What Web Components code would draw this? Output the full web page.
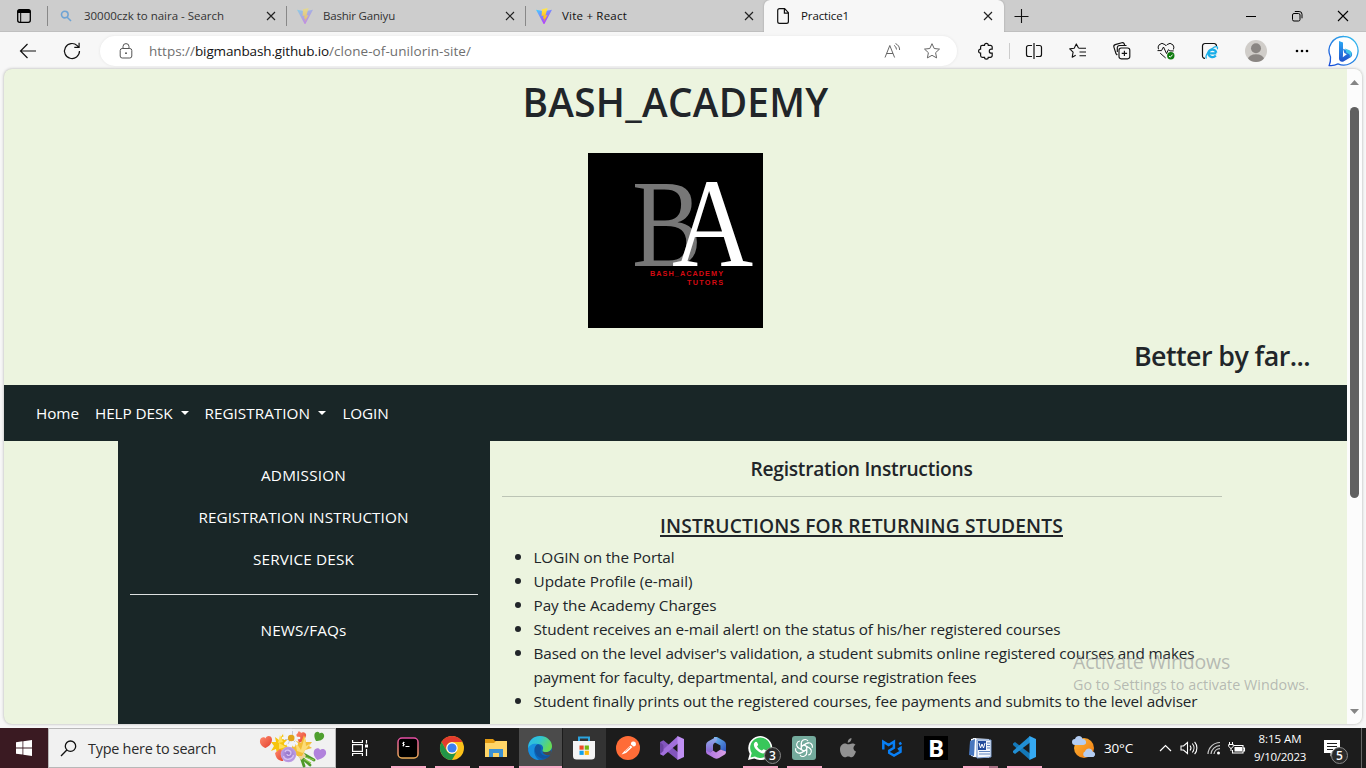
<!DOCTYPE html>
<html lang="en">
<head>
<meta charset="utf-8">
<title>Practice1</title>
<style>
html,body{margin:0;height:100%;overflow:hidden}
body{font-family:"Open Sans","Noto Sans",sans-serif;color:#212529;background:#f7f7f7}
</style>
</head>
<body>
<desk-screen></desk-screen>
<script>
const ICONS = {
  tabs:[16,16,`<rect x="1.7" y="1.7" width="12.6" height="12.6" rx="2" fill="none" stroke="#000" stroke-width="1.3"/><path d="M1.5 5V3.5a2 2 0 0 1 2-2h9a2 2 0 0 1 2 2V5z"/><path d="M4.7 5v9" stroke="#000"/>`],
  lens:[12,12,`<g fill="none" stroke="#6ea3d4" stroke-width="1.6"><circle cx="4.8" cy="4.6" r="3.3"/><path d="M7.2 7.2l3.8 3.8"/></g>`],
  vite:[16,16,`<defs><linearGradient id="a" x1="0" y1="0" x2=".6" y2="1"><stop offset="0" stop-color="#41d1ff"/><stop offset="1" stop-color="#bd34fe"/></linearGradient><linearGradient id="b" x1="0" y1="0" x2="0" y2="1"><stop offset="0" stop-color="#ffea50"/><stop offset="1" stop-color="#ffa800"/></linearGradient></defs><path d="M0 1.8L8 3.2l8-1.4L8.4 16h-.8z" fill="url(#a)"/><path d="M11.6 0L6 1.2 5.6 8l2-.4-.6 3.2 1.5-.4-.8 3.6 3.8-7-2.1.4z" fill="url(#b)"/>`],
  page:[14,16,`<path d="M1.7 2.6a1.9 1.9 0 0 1 1.9-1.9h5l3.8 4v8.7a1.9 1.9 0 0 1-1.9 1.9H3.6a1.9 1.9 0 0 1-1.9-1.9zM8.4.8v4.3h4" fill="none" stroke="#111" stroke-width="1.2"/>`],
  x:[10,10,`<path d="M1 1l8 8M9 1L1 9" stroke="#222" stroke-width="1.15"/>`],
  plus:[14,14,`<path d="M7.5 0v14M.5 7.5h14" stroke="#111" stroke-width="1.1"/>`],
  min:[12,12,`<path d="M1 6.5h10" stroke="#000"/>`],
  max:[12,12,`<g fill="none" stroke="#000"><rect x="1.5" y="3.5" width="7.5" height="7.5" rx="1.5"/><path d="M3.8 1.5h4.4a2.8 2.8 0 0 1 2.8 2.8v4"/></g>`],
  close:[12,12,`<path d="M1 1l10 10M11 1L1 11" stroke="#000" stroke-width="1.1"/>`],
  back:[18,16,`<path d="M17 8H1.5M8.5 1L1.5 8l7 7" fill="none" stroke="#111" stroke-width="1.2"/>`],
  reload:[18,18,`<path d="M16.5 9a7.5 7.5 0 1 1-2.3-5.4l1.6 1.6M16.1.8v4.6h-4.8" fill="none" stroke="#111" stroke-width="1.2"/>`],
  lock:[14,16,`<g fill="none" stroke="#555"><rect x="1.2" y="5.5" width="11.6" height="9.5" rx="2"/><path d="M4 5.5V3.6a3 3 0 0 1 6 0v1.9"/></g><circle cx="7" cy="10.2" r=".9" fill="#444"/>`],
  read:[17,16,`<g fill="none" stroke="#666"><path d="M1 14.5L5.8 2.5l4.8 12M2.6 10.5h6.4M10 2.3a5 5 0 0 1 2.5 4.2M11.5.6a7 7 0 0 1 4.1 6.4"/></g>`],
  star:[18,18,`<path d="M9 1.7l2.2 4.8 5.3.6-3.9 3.6 1 5.2L9 13.3l-4.6 2.6 1-5.2L1.5 7.1l5.3-.6z" fill="none" stroke="#666" stroke-linejoin="round"/>`],
  ext:[16,16,`<path d="M4.4 2.3h2.1a1.9 1.9 0 0 1 3.8 0h2.1a1.8 1.8 0 0 1 1.8 1.8v2.1h-.9a2 2 0 0 0 0 4h.9v2.3a1.8 1.8 0 0 1-1.8 1.8h-2.1a1.9 1.9 0 0 1-3.8 0H4.4a1.8 1.8 0 0 1-1.8-1.8v-2.3a2 2 0 0 1 0-4V4.1a1.8 1.8 0 0 1 1.8-1.8z" fill="none" stroke="#111" stroke-width="1.2"/>`],
  split:[16,16,`<path d="M6 2.5H2.5a2 2 0 0 0-2 2v7a2 2 0 0 0 2 2H6M10 2.5h3.5a2 2 0 0 1 2 2v7a2 2 0 0 1-2 2H10M8 0v16" fill="none" stroke="#111" stroke-width="1.2"/>`],
  favs:[18,16,`<path d="M9.5 5L7.3.9 5.2 5.3.7 5.9l3.4 3.3-.9 5 3.5-1.9M9.5 5.2H17M10.5 9H17M10.5 12.8H17" fill="none" stroke="#111" stroke-width="1.1" stroke-linejoin="round"/>`],
  coll:[18,18,`<g fill="none" stroke="#111" stroke-width="1.15"><rect x="6" y="6" width="10.8" height="10.8" rx="2.2"/><path d="M11.4 8.7v5.4M8.7 11.4h5.4M4.3 13L3 11.6.9 5.1A2 2 0 0 1 2.2 2.6L8.8.7a2 2 0 0 1 2.5 1.3l.4 1.500M4.3 10V5.7a2.2 2.2 0 0 1 2.2-2.2h7"/></g>`],
  health:[18,18,`<path d="M1.5 7.3a4.3 4.3 0 0 1 .6-4.500 4.200 4.200 0 0 1 5.800-.2L9 3.700l1.100-1.100a4.200 4.200 0 0 1 5.800.2 4.300 4.300 0 0 1 .500 4.700M3.200 11.200l5.500 4.800M.5 8.600h4l2-3.600 3 6.500 2-3.900 1.200 1.300h4" fill="none" stroke="#111" stroke-width="1"/><circle cx="13.800" cy="13.800" r="3.700" fill="#107c10"/><path d="M12 14l1.300 1.200 2.300-2.600" fill="none" stroke="#fff"/>`],
  ie:[18,18,`<path d="M4 16.300H3.700A2.200 2.200 0 0 1 1.500 14V4a2.500 2.500 0 0 1 2.500-2.500h9A2.500 2.500 0 0 1 15.500 4" fill="none" stroke="#111" stroke-width="1.200"/><path d="M15.300 11.300H7.500M7.300 11a4.100 4.100 0 0 1 8-.3M7.200 11a4.300 4.300 0 0 0 7.600 2.500" fill="none" stroke="#19aee8" stroke-width="2.300"/><path d="M5.500 16.500c-2-2.500 2.500-8.500 7.500-11.300 3-1.300 4.200-.3 3.300 2" fill="none" stroke="#19aee8" stroke-width="1.300"/>`],
  user:[22,22,`<defs><clipPath id="c"><circle cx="11" cy="11" r="11"/></clipPath></defs><circle cx="11" cy="11" r="11" fill="#d0cdc9"/><g fill="#8a8683" clip-path="url(#c)"><circle cx="11" cy="8.200" r="5"/><ellipse cx="11" cy="19" rx="8" ry="4.700"/></g>`],
  dots:[14,4,`<circle cx="2" cy="2" r="1.300"/><circle cx="7" cy="2" r="1.300"/><circle cx="12" cy="2" r="1.300"/>`],
  bing:[32,32,`<defs><linearGradient id="d" x1="1" y1="0" x2="0" y2="1"><stop offset="0" stop-color="#35c5f0"/><stop offset="1" stop-color="#174ad8"/></linearGradient><linearGradient id="e" x1="0" y1="0" x2="0" y2="1"><stop offset="0" stop-color="#2ba8f5"/><stop offset="1" stop-color="#2052cb"/></linearGradient></defs><path d="M16 1.500a14.300 14.300 0 1 1-6 27.400c-3 1.500-6 2-8.800 1.600.9-2 1.500-5 1.300-8.500A14.300 14.300 0 0 1 16 1.500z" fill="#fff" stroke="url(#d)" stroke-width="1.300"/><path d="M11 6l4 1.500v12.200l-.2 2.500 4-3-2.500-1.200-1.300-4.300 7.600 3.100c2 1 2 3.500.5 5.200l-7.600 4.500c-2.500 1-4.500-.6-4.500-3z" fill="url(#e)"/><path d="M17 13.500l4.600 1.800c3 1.600 2.500 5.200 0 7.200 1-2.600-.5-3.800-3-4.500z" fill="#42c5e8"/>`],
  up:[9,5,`<path d="M0 5h9L4.500 0z" fill="#858585"/>`],
  down:[9,5,`<path d="M0 0h9L4.500 5z" fill="#858585"/>`],
  win:[16,16,`<path d="M0 2.200L6.500 1.300v6.200H0zM7.300 1.200L16 0v7.500H7.300zM0 8.400h6.500v6.200L0 13.700zM7.300 8.400H16V16l-8.700-1.200z" fill="#fff"/>`],
  search:[17,17,`<g fill="none" stroke="#111" stroke-width="1.300"><circle cx="10.500" cy="6.200" r="5.200"/><path d="M6.800 10L1 16"/></g>`],
  flowers:[68,38,`<defs><linearGradient id="r" x1="0" y1="0" x2="1" y2="1"><stop offset="0" stop-color="#ff8a6c"/><stop offset="1" stop-color="#e2402f"/></linearGradient><radialGradient id="v"><stop offset="0" stop-color="#8f6fc6"/><stop offset="1" stop-color="#bfa0e6"/></radialGradient></defs>
<path d="M6.500 9.500C7 6 13 6 13 10.500c0 4-3 7-6.500 8.500C3 17.500.5 15 1 11.500 1.500 8 5.500 7.500 6.500 9.500z" fill="url(#r)"/><path d="M60.500 4.500c2-2 5.500 0 4.500 3.500-1 3-4.500 4-8 4-1.500-3-2.500-6.500-.5-8.500 2-1.500 4-.5 4 1z" fill="#4f9f2e"/><path d="M61 21c2.500-2.500 7-.5 6 4-1 3-5 5-8.500 6-3-2.500-4.500-6-3.500-9 1-3.500 5.500-3.500 6-1z" fill="#b182dc"/>
<path d="M37 5c1-3 4-3 5-1 2-2 6 0 5 3-1 4-4 6-7 7z" fill="url(#r)"/>
<path d="M41 23l14 8M40 26l11 10M42 28l3 9" stroke="#4f9a2a" stroke-width="2.800" stroke-linecap="round"/><path d="M46 28l9 3M45 30l7 4" stroke="#8cc94a" stroke-width="1.200"/>
<path d="M33 20l8-3 6 10-5 4z" fill="#ecd29a"/>
<path d="M16 8l4 3 4-6 1 6 5-1-3 5 4 4-5 0 1 6-5-4-4 4-1-5-5 2 3-5-3-4 5 0z" fill="#f7c40e"/><path d="M19 14l2-8 3 7zM20 14l7 4-7 2z" fill="#ffe05a"/>
<path d="M34 21c-3-4-1-7 3-6l-2-4 7 3 3-8 2 7 6 0-3 4 3 2-7 2-3 6-5 0z" fill="#f3bd36"/><path d="M36 12l6 9 4-14 1 10 5-3-8 10-6-2z" fill="#fbdc78"/>
<g stroke="#f2f3f8" stroke-width="2.700" stroke-linecap="round"><path d="M32 1v16M24 9h16M26.300 3.300l11.400 11.400M37.700 3.300L26.300 14.700M29 1.600l6 14.800M35 1.600l-6 14.800"/></g><g stroke="#a9aebf" stroke-width=".6"><path d="M33.500 2v5M26 10.500h5M36 13l-3-3M29 15l2-4"/></g><circle cx="32.200" cy="9" r="3.300" fill="#dfa51b"/>
<path d="M16 24l5-4 5 4-2 8c-4 0-7-2-8-8z" fill="url(#r)"/><circle cx="29.500" cy="25.500" r="7.800" fill="url(#v)"/><path d="M26 23c1-3 6-2 6 1s-4 3-4 1M24.500 27c1 5 9 4 10-1" fill="none" stroke="#d6c0f2" stroke-width="1.300"/>`],
  task:[18,16,`<g fill="none" stroke="#fff" stroke-width="1.200"><rect x="1.600" y="4.600" width="9.800" height="6.800"/><path d="M1.600 0v2.500h9.800V0M1.600 16v-2.500h9.800V16M15.500 0v3.500M15.500 9v7"/></g><path d="M14 4.500h3v3h-3z" fill="#fff"/>`],
  term:[22,22,`<defs><linearGradient id="f" x1="0" y1="0" x2="0" y2="1"><stop offset="0" stop-color="#e54da4"/><stop offset="1" stop-color="#ecae57"/></linearGradient></defs><rect x="1" y="1" width="20" height="20" rx="4" fill="#000" stroke="url(#f)" stroke-width="1.500"/><path d="M7.500 5.500l-2 .8 2 1.400-2 1M6.500 4.800v4.600M8.500 9.500h4" fill="none" stroke="#fff"/>`],
  chrome:[24,24,`<circle cx="12" cy="12" r="12" fill="#fbc11a"/><path d="M1.600 6A12 12 0 0 1 22.400 6H12a6 6 0 0 0-5.200 9z" fill="#e33b2e"/><path d="M1.600 6a12 12 0 0 0 10.400 18l5.200-9A6 6 0 0 1 6.800 15z" fill="#229447"/><circle cx="12" cy="12" r="5.700" fill="#fff"/><circle cx="12" cy="12" r="4.600" fill="#3c7ff0"/>`],
  folder:[22,18,`<path d="M0 0h8l2 2h11v4H0z" fill="#e39a11"/><path d="M0 4h9l2-2h11v16H0z" fill="#ffd567"/><path d="M4 10h14v8h-4v-4H8v4H4z" fill="#3c91d3"/>`],
  edge:[24,24,`<defs><linearGradient id="g" x1="0" y1="0" x2="1" y2=".4"><stop offset="0" stop-color="#2bb8ee"/><stop offset=".5" stop-color="#32c5d0"/><stop offset="1" stop-color="#67da55"/></linearGradient></defs><circle cx="12" cy="12" r="12" fill="#0b67bd"/><path d="M.2 10C1 4 6 0 12 0c7 0 12 5 12 10 0 4-3 6-6 6-4 0-4-1.200-3.200-2.500C16 11 14 8 10 8 5 8 1 10 .2 13z" fill="url(#g)"/><path d="M9 8.200c-4 2-3 12 5 14.300 3 .8 7-1 8.500-3.500-6 2.500-12-1-9.500-6 .5-1.500-1-4.700-4-4.800z" fill="#12549f"/><path d="M.2 13C1 9 5 7 10 8c-5 2-5.500 11 1 16C4 24 0 18 .2 13z" fill="#188fdf"/><path d="M14.700 13.500c-1 1.500 0 2.700 3.300 2.700 2 0 4-.7 5.200-2.200l-.5 4.500c-4 2-9-.5-8-5z" fill="#4b4b4b"/>`],
  store:[24,24,`<path d="M7 6V1.500h10V6" fill="none" stroke="#2ba4df" stroke-width="2"/><path d="M1 5h22v15a3.500 3.500 0 0 1-3.500 3.500h-15A3.500 3.500 0 0 1 1 20z" fill="#f4f4f4"/><path d="M7.500 9.500h4.200v4.200H7.500z" fill="#ef4b27"/><path d="M12.700 9.500h4.200v4.200h-4.200z" fill="#75b710"/><path d="M7.500 14.700h4.200v4.200H7.500z" fill="#12a0e8"/><path d="M12.700 14.700h4.200v4.200h-4.200z" fill="#fdb90b"/>`],
  postman:[24,24,`<circle cx="12" cy="12" r="12" fill="#ff6c37"/><path d="M5.500 18.500l2.500-3 6.500-6 2 1.600L10 17zM15 8.500a2.500 2.500 0 1 1 2.500 2z" fill="#fff"/><path d="M9 15.500l5-4.500" stroke="#ff6c37" stroke-width=".7"/>`],
  vs:[24,24,`<path d="M0 6l3.500-1.700L18 16.200V24L5 13.700 3.400 15v4.800L0 18z" fill="#8255bd"/><path d="M3.400 19.800L18 7.500V0L0 16.500V18z" fill="#a270dc"/><path d="M17.500 0L24 3v18l-6.500 3z" fill="#c090f3"/><path d="M0 6l3.400 3v6L0 18z" fill="#6b43a1"/>`],
  m365:[20,22,`<defs><linearGradient id="i" x1="0" y1="0" x2="1" y2="1"><stop offset="0" stop-color="#6fc1f0"/><stop offset="1" stop-color="#2d4fbd"/></linearGradient><linearGradient id="l" x1="0" y1="0" x2="0" y2="1"><stop offset="0" stop-color="#8fb4ee"/><stop offset="1" stop-color="#8c5fd0"/></linearGradient><linearGradient id="m"><stop offset="0" stop-color="#a86fe0"/><stop offset="1" stop-color="#dba0e6"/></linearGradient></defs><path d="M8 0h3l7 4a4 4 0 0 1 2 3.500V15l-5.500-2.500V8.500L8 5z" fill="url(#i)"/><path d="M10 0L2 4.500A4 4 0 0 0 0 8v6.500l3 2 4-3V8.500C7 6 11 5 11 2z" fill="url(#l)"/><path d="M0 13.500c0 2.500.5 3.200 2 4L8 21c2 1 3 1 5 0l5-3c2-1.200 2-2 2-3.500l-5.500-2L10 15.500 7 13.500l-3 2z" fill="url(#m)"/>`],
  wa:[24,24,`<path d="M0 24l1.700-6.200A12 12 0 1 1 6.300 22.500z" fill="#fff"/><path d="M2.500 21.500l1.200-4.400A10.200 10.200 0 1 1 7 20.400z" fill="#38c75a"/><path d="M6.300 7c2-2.500 3-.5 3.800 1.500.3.800-1.300 1.500-1 2 1 2 2.500 3.300 4.500 4 .9.200 1.200-1.500 2-1.300 2.500 1 3 1.300 2.300 2.600-1.300 2.400-4.900 2-8-.7C6.500 12.300 5 9 6.300 7z" fill="#fff"/>`],
  gpt:[24,24,`<rect width="24" height="24" rx="3" fill="#74aa9c"/><g fill="none" stroke="#fff" stroke-width="1.050"><g id="j"><path d="M9.400 13.500V7.200a3.700 3.700 0 0 1 6.600-2.300M9.400 10.300l5.200-3a3.700 3.700 0 0 1 2.300-.4"/></g><use href="#j" transform="rotate(60 12 12)"/><use href="#j" transform="rotate(120 12 12)"/><use href="#j" transform="rotate(180 12 12)"/><use href="#j" transform="rotate(240 12 12)"/><use href="#j" transform="rotate(300 12 12)"/></g>`],
  apple:[16,20,`<path d="M11.500 0c.2 2.500-1.500 4.500-3.800 4.700C7.500 2.300 9.300.4 11.500 0zM15.500 6.700c-3 1.900-2.500 5.500.5 6.900-1 2.800-2.600 5.700-4.300 5.700-1.300 0-2-.8-3.500-.8s-2.300.8-3.500.8C2.300 19.300 0 15 0 11.500 0 8 2.200 5.500 5 5.500c1.300 0 2.300.8 3.400.8 1 0 2.200-.9 3.900-.9 1.300 0 2.400.5 3.200 1.300z" fill="#929292"/>`],
  mui:[22,18,`<path d="M2.300 10.500V2.700l5.300 3.300 5.300-3.300v6L8.200 11.600v2.200l4.800 2.700 6.500-3.700V9l-2.500 1.500M18.200 5.200l2.200-1.300" fill="none" stroke="#087ff5" stroke-width="2.500"/>`],
  word:[23,22,`<path d="M4 1l16 1v19L4 20z" fill="#dbe6f6"/><path d="M2 2l5-1v19l-5-1z" fill="#fff"/><path d="M1 4l5-2-1 17-5-1z" fill="#4776be"/><path d="M8 3h14v17l-14 1z" fill="#f4f7fc" stroke="#7899cc"/><path d="M9 4h8v9H9z" fill="#234c9c"/><path d="M10 6l1.500 5 1.500-4 1.500 4L16 6" fill="none" stroke="#fff"/><path d="M18 6h3M18 8.500h3M18 11h3M10 14.500h11M10 17h11" stroke="#6085bf"/>`],
  code:[24,24,`<path d="M1 7.500L3 6l15 11.500V24L1 9z" fill="#1478b8"/><path d="M1 16.500L3 18 18 6.500V0L1 15z" fill="#218fd4"/><path d="M17.500 0L24 3v18l-6.500 3z" fill="#35a9f2"/>`],
  weather:[24,24,`<defs><linearGradient id="k" x1="0" y1="0" x2="1" y2="1"><stop offset="0" stop-color="#ffb536"/><stop offset="1" stop-color="#ef7a10"/></linearGradient></defs><circle cx="12" cy="12" r="10" fill="url(#k)"/><path d="M3 9a3 3 0 0 1 0-6c1-4 7-4 7.500 0a3 3 0 0 1 1 6z" fill="#b4cdf2"/><path d="M13 21a3 3 0 0 1 0-5.500c1-4 7-4 7.500 0a2.900 2.900 0 0 1 1 5.500z" fill="#b4cdf2"/>`],
  chev:[13,8,`<path d="M1 7l5.500-5.500L12 7" fill="none" stroke="#fff" stroke-width="1.200"/>`],
  sound:[18,14,`<path d="M1 5h2.500l4-3.500v11L3.500 9H1zM10 4.500a4 4 0 0 1 0 5M12.300 2.500a7 7 0 0 1 0 9M14.600.8a9.500 9.500 0 0 1 0 12.400" fill="none" stroke="#fff" stroke-width="1.100"/>`],
  wifi:[14,14,`<g fill="none" stroke="#ccc" stroke-width="1.200"><path d="M1 13A12 12 0 0 1 13 1.500M4 13a9 9 0 0 1 9-8.300M7 13a6 6 0 0 1 6-5.300"/></g><circle cx="11.500" cy="12" r="1.500" fill="#fff"/>`],
  batt:[17,13,`<path d="M6 3.500h9V11H4.500V8M15 6h1.500v3H15" fill="none" stroke="#fff" stroke-width="1.100"/><path d="M6.500 5H14v4.500H6.500z" fill="#fff"/><path d="M1.500 0v2.500M4.500 0v2.500M.7 2.500h4.600v2L3 6.500l-2.300-2zM3 6v3" stroke="#fff" fill="#1c1c1c"/>`],
  note:[16,17,`<path d="M0 0h16v13h-6l-3.500 3.500V13H0z" fill="#fff"/><path d="M3 3.500h10M3 6.500h10M3 9.500h6" stroke="#1c1c1c" stroke-width="1.100"/>`],
  logo:[175,175,`<rect width="175" height="175" fill="#000"/><g font-family="Liberation Serif,serif" font-size="125"><text transform="translate(44 113) scale(.84 1)" fill="#777">B</text><text transform="translate(84 113) scale(.9 1.010)" fill="#fff">A</text></g><g font-family="Liberation Sans,sans-serif" font-size="7.300" font-weight="700" fill="#d40a12" text-anchor="end"><text x="135" y="123.200" textLength="73">BASH_ACADEMY</text><text x="135" y="131.700" textLength="36">TUTORS</text></g>`]
};

function component(name, css, html) {
  const t = document.createElement('template');
  t.innerHTML = `<style>${css}</style>${html}`;
  customElements.define(name, class extends HTMLElement {
    constructor() {
      super();
      this.attachShadow({mode: 'open'}).append(t.content.cloneNode(true));
    }
  });
}

customElements.define('ui-icon', class extends HTMLElement {
  connectedCallback() {
    if (this.shadowRoot) return;
    const [w, h, body] = ICONS[this.getAttribute('name')];
    this.attachShadow({mode: 'open'}).innerHTML =
      `<style>:host{display:block;flex:none;width:${w}px;height:${h}px}svg{display:block;overflow:visible}</style><svg width="${w}" height="${h}" viewBox="0 0 ${w} ${h}">${body}</svg>`;
  }
});

component('browser-tab', `
:host{display:flex;align-items:center;box-sizing:border-box;width:239px;height:32px;padding:0 10px 0 9px;position:relative;font-size:11.500px;color:#333}
:host::before{content:"";width:1px;height:20px;background:#888;position:absolute;left:0;top:6px}
:host([active]){width:240px;padding-right:11px;background:#f7f7f7;border-radius:6px 6px 0 0;color:#111;box-shadow:0 0 2px #999;clip-path:inset(0 -3px 0 -3px)}
:host([active])::before{display:none}
.i{width:20px;display:flex;justify-content:center;margin-right:8px}
:host([faded]) .i{opacity:.45}
.t{flex:1;line-height:16px}`,
`<span class="i"><slot name="icon"></slot></span><span class="t"><slot></slot></span><ui-icon name="x"></ui-icon>`);

component('tab-strip', `
:host{display:flex;height:32px;background:#cdcdcd;box-shadow:inset 0 -1px #bfbfbf}
.c{display:flex;align-items:center;justify-content:center}`,
`<div class="c" style="width:47px"><ui-icon name="tabs"></ui-icon></div>
<browser-tab><ui-icon slot="icon" name="lens"></ui-icon><fit-text w="140">30000czk to naira - Search</fit-text></browser-tab>
<browser-tab faded><ui-icon slot="icon" name="vite"></ui-icon><fit-text w="72">Bashir Ganiyu</fit-text></browser-tab>
<browser-tab style="color:#111"><ui-icon slot="icon" name="vite"></ui-icon><fit-text w="65">Vite + React</fit-text></browser-tab>
<browser-tab active><ui-icon slot="icon" name="page"></ui-icon><fit-text w="48">Practice1</fit-text></browser-tab>
<div class="c" style="width:34px"><ui-icon name="plus"></ui-icon></div>
<div class="c" style="width:46px;margin-left:auto"><ui-icon name="min"></ui-icon></div>
<div class="c" style="width:46px"><ui-icon name="max"></ui-icon></div>
<div class="c" style="width:46px"><ui-icon name="close"></ui-icon></div>`);

component('tool-bar', `
:host{display:flex;height:37px;background:#f7f7f7;align-items:center;padding:0 0 0 6px}
.c{width:44px;display:flex;align-items:center;justify-content:center}
.a{display:flex;align-items:center;width:857px;height:30px;margin-left:6px;border-radius:15px;background:#fff;box-shadow:0 0 3px #e4e4e4;font-size:13.500px;color:#6f6f6f}
.a b{font-weight:400;color:#111}.u{flex:1;display:flex;margin-left:1px}
.s{width:1px;height:16px;background:#ccc;margin:0 2px 0 1px}`,
`<div class="c"><ui-icon name="back"></ui-icon></div><div class="c"><ui-icon name="reload"></ui-icon></div>
<div class="a"><div class="c" style="width:48px;margin-left:2px;margin-right:-2px"><ui-icon name="lock"></ui-icon></div><span class="u"><fit-text w="46">https://</fit-text><b><fit-text w="134">bigmanbash.github.io</fit-text></b><fit-text w="142">/clone-of-unilorin-site/</fit-text></span>
<div class="c" style="width:40px"><ui-icon name="read"></ui-icon></div><div class="c" style="width:40px;margin-right:5px"><ui-icon name="star"></ui-icon></div></div>
<div class="c" style="margin-left:7px">
<ui-icon name="ext"></ui-icon></div><div class="s"></div>
<div class="c"><ui-icon name="split"></ui-icon></div><div class="c"><ui-icon name="favs"></ui-icon></div><div class="c"><ui-icon name="coll"></ui-icon></div><div class="c"><ui-icon name="health"></ui-icon></div><div class="c"><ui-icon name="ie"></ui-icon></div><div class="c" style="width:48px"><ui-icon name="user"></ui-icon></div><div class="c"><ui-icon name="dots"></ui-icon></div><div class="c" style="width:40px"><ui-icon name="bing"></ui-icon></div>`);

component('site-header', `
:host{display:flex;flex-direction:column;align-items:center;height:316px}
h1{margin:9px 0 27px;font-size:38.800px;line-height:48px;font-weight:600}
h2{margin:11px 37px 0 auto;font-size:26.800px;line-height:34px;font-weight:600}`,
`<h1><fit-text w="306">BASH_ACADEMY</fit-text></h1><ui-icon name="logo"></ui-icon><h2><fit-text w="176">Better by far...</fit-text></h2>`);

component('site-nav', `
:host{display:flex;align-items:center;height:56px;box-sizing:border-box;padding-left:32px;gap:16px;background:#192627;color:#fff;font-size:15.300px;line-height:24px}
.d{display:flex;align-items:center;gap:8px}
.d::after{content:"";border:4.500px solid transparent;border-top-color:#fff;border-bottom:0}`,
`<fit-text w="43">Home</fit-text><span class="d"><fit-text w="77.5">HELP DESK</fit-text></span><span class="d"><fit-text w="105.5">REGISTRATION</fit-text></span><fit-text w="46" style="margin-left:.5px">LOGIN</fit-text>`);

component('side-menu', `
:host{display:flex;flex-direction:column;align-items:center;box-sizing:border-box;width:372px;padding:22px 12px 0;background:#192627;color:#fff;font-size:15.300px;line-height:24px;gap:18px}
hr{width:100%;margin:5px 0 5px;border:0;border-top:1px solid #dde0e0}
fit-text{margin-right:1px}`,
`<fit-text w="85">ADMISSION</fit-text><fit-text w="210">REGISTRATION INSTRUCTION</fit-text><fit-text w="101">SERVICE DESK</fit-text><hr><fit-text w="86">NEWS/FAQs</fit-text>`);

component('instruction-panel', `
:host{display:block;box-sizing:border-box;width:744px;padding:16px 12px 0;font-size:15.300px;line-height:24px}
h5{margin:0 1px 0 0;text-align:center;font-size:19.200px;line-height:24px;font-weight:600}
hr{margin:15px 0 17px;border:0;border-top:1px solid #bcc4b5}
ul{margin:7px 0 0;padding-left:31.500px}li fit-text{display:block}li::marker{font-size:17px}`,
`<h5><fit-text w="222">Registration Instructions</fit-text></h5><hr>
<h5><fit-text w="403" underline>INSTRUCTIONS FOR RETURNING STUDENTS</fit-text></h5>
<ul><li><fit-text w="141">LOGIN on the Portal</fit-text></li><li><fit-text w="159">Update Profile (e-mail)</fit-text></li><li><fit-text w="183">Pay the Academy Charges</fit-text></li><li><fit-text w="527">Student receives an e-mail alert! on the status of his/her registered courses</fit-text></li><li><fit-text w="661">Based on the level adviser's validation, a student submits online registered courses and makes</fit-text><fit-text w="443">payment for faculty, departmental, and course registration fees</fit-text></li><li><fit-text w="664">Student finally prints out the registered courses, fee payments and submits to the level adviser</fit-text></li></ul>`);

component('scroll-bar', `
:host{display:flex;flex-direction:column;align-items:center;width:15px;background:#fcfcfc;box-sizing:border-box;padding:11px 0 10px}
.t{width:9px;height:391px;border-radius:5px;background:#606060;margin:22px 0 auto}`,
`<ui-icon name="up"></ui-icon><div class="t"></div><ui-icon name="down"></ui-icon>`);

component('web-view', `
:host{display:flex;width:1358px;height:655px;margin:0 4px 4px;border-radius:8px;overflow:hidden;background:#ecf4df;box-shadow:0 0 3px #aaa}
.p{width:1343px}.b{display:flex;width:1116px;height:283px;margin:0 auto 0 114px}`,
`<div class="p"><site-header></site-header><site-nav></site-nav><div class="b"><side-menu></side-menu><instruction-panel></instruction-panel></div></div><scroll-bar></scroll-bar>`);

component('task-button', `
:host{display:flex;align-items:center;justify-content:center;width:44px;height:40px;position:relative}
:host([open])::after{content:"";position:absolute;left:5px;width:35px;bottom:0;height:2px;background:#f9a9c6}
:host([active]){background:linear-gradient(90deg,transparent 1px,#4b4b4b 1px)}
:host([active])::after{left:1px;width:43px}
:host([lit]){background:linear-gradient(90deg,transparent 1px,#333 1px)}
:host([stack])::after{background:linear-gradient(90deg,#f9a9c6 26px,#a97186 26px)}`,
`<slot></slot>`);

component('count-badge', `
:host{position:absolute;display:flex;align-items:center;justify-content:center;width:15px;height:15px;border:1px solid #888;border-radius:50%;background:#2b2b2b;color:#fff;font-size:12px;line-height:15px;font-weight:600}`,
`<slot></slot>`);

component('task-bar', `
:host{display:flex;height:40px;background:#1c1c1c;color:#fff}
.w{width:48px;background:#3a1a22;display:flex;align-items:center;justify-content:center}
.q{display:flex;align-items:center;box-sizing:border-box;width:288px;margin-right:2px;border:1px solid #b8b8b8;background:#f1f1f1;padding:0 8px 0 11px;font-size:14.400px;color:#2b2b2b}
.q fit-text{margin:0 auto 0 11px}
.bs{font:700 24px/24px "Open Sans",sans-serif;width:24px;height:24px;background:#000;text-align:center}
.n{display:flex;align-items:center;margin-left:26px;font-size:13.500px}
.clk{display:flex;flex-direction:column;align-items:center;font-size:11.500px;line-height:18px;width:52px;margin:-1px 1px 0 9px}
.m{position:relative;margin:0 0 0 17px}
.e{margin-left:auto;width:4px;border-left:1px solid #666}`,
`<div class="w"><ui-icon name="win"></ui-icon></div>
<div class="q"><ui-icon name="search"></ui-icon><fit-text w="128">Type here to search</fit-text><ui-icon name="flowers"></ui-icon></div>
<task-button><ui-icon name="task"></ui-icon></task-button>
<task-button open style="margin-left:4px"><ui-icon name="term"></ui-icon></task-button>
<task-button open><ui-icon name="chrome"></ui-icon></task-button>
<task-button open><ui-icon name="folder"></ui-icon></task-button>
<task-button open active><ui-icon name="edge"></ui-icon></task-button>
<task-button lit><ui-icon name="store"></ui-icon></task-button>
<task-button><ui-icon name="postman"></ui-icon></task-button>
<task-button><ui-icon name="vs"></ui-icon></task-button>
<task-button><ui-icon name="m365"></ui-icon></task-button>
<task-button open><ui-icon name="wa"></ui-icon><count-badge style="left:26px;top:19px">3</count-badge></task-button>
<task-button open><ui-icon name="gpt"></ui-icon></task-button>
<task-button><ui-icon name="apple"></ui-icon></task-button>
<task-button><ui-icon name="mui"></ui-icon></task-button>
<task-button><span class="bs">B</span></task-button>
<task-button open stack><ui-icon name="word"></ui-icon></task-button>
<task-button open><ui-icon name="code"></ui-icon></task-button>
<div class="n"><ui-icon name="weather"></ui-icon><fit-text w="29" style="margin:0 26px 0 8px">30°C</fit-text><ui-icon name="chev"></ui-icon><ui-icon name="sound" style="margin:0 9px 0 8px"></ui-icon><ui-icon name="wifi"></ui-icon><ui-icon name="batt" style="margin-left:7px"></ui-icon><div class="clk"><fit-text w="43">8:15 AM</fit-text><fit-text w="52">9/10/2023</fit-text></div><div class="m"><ui-icon name="note"></ui-icon><count-badge style="left:7px;top:7px">5</count-badge></div></div><div class="e"></div>`);

component('activation-notice', `
:host{position:absolute;left:1073px;top:649px;color:rgba(135,135,140,.55);font-size:19.500px;line-height:26px}
p{margin:0}p+p{font-size:14.300px;line-height:20px}`,
`<p><fit-text w="157">Activate Windows</fit-text></p><p><fit-text w="236">Go to Settings to activate Windows.</fit-text></p>`);

component('desk-screen', `
:host{display:block;position:relative;width:1366px;height:768px;overflow:hidden;background:#f7f7f7}`,
`<tab-strip></tab-strip><tool-bar></tool-bar><web-view></web-view><task-bar></task-bar><activation-notice></activation-notice>`);

/* A single line of text tracked so that it fills the width given in "w". */
customElements.define('fit-text', class extends HTMLElement {
  connectedCallback() {
    if (!this.shadowRoot) this.attachShadow({mode: 'open'}).innerHTML =
      `<style>:host{display:inline-block;white-space:pre}:host([underline]) span{text-decoration:underline;text-decoration-thickness:2px;text-underline-offset:2px}</style><span><slot></slot></span>`;
    const w = +this.getAttribute('w'), span = this.shadowRoot.querySelector('span');
    const n = this.textContent.length;
    this.style.letterSpacing = (w - span.getBoundingClientRect().width) / n + 'px';
  }
});
</script>
</body>
</html>
